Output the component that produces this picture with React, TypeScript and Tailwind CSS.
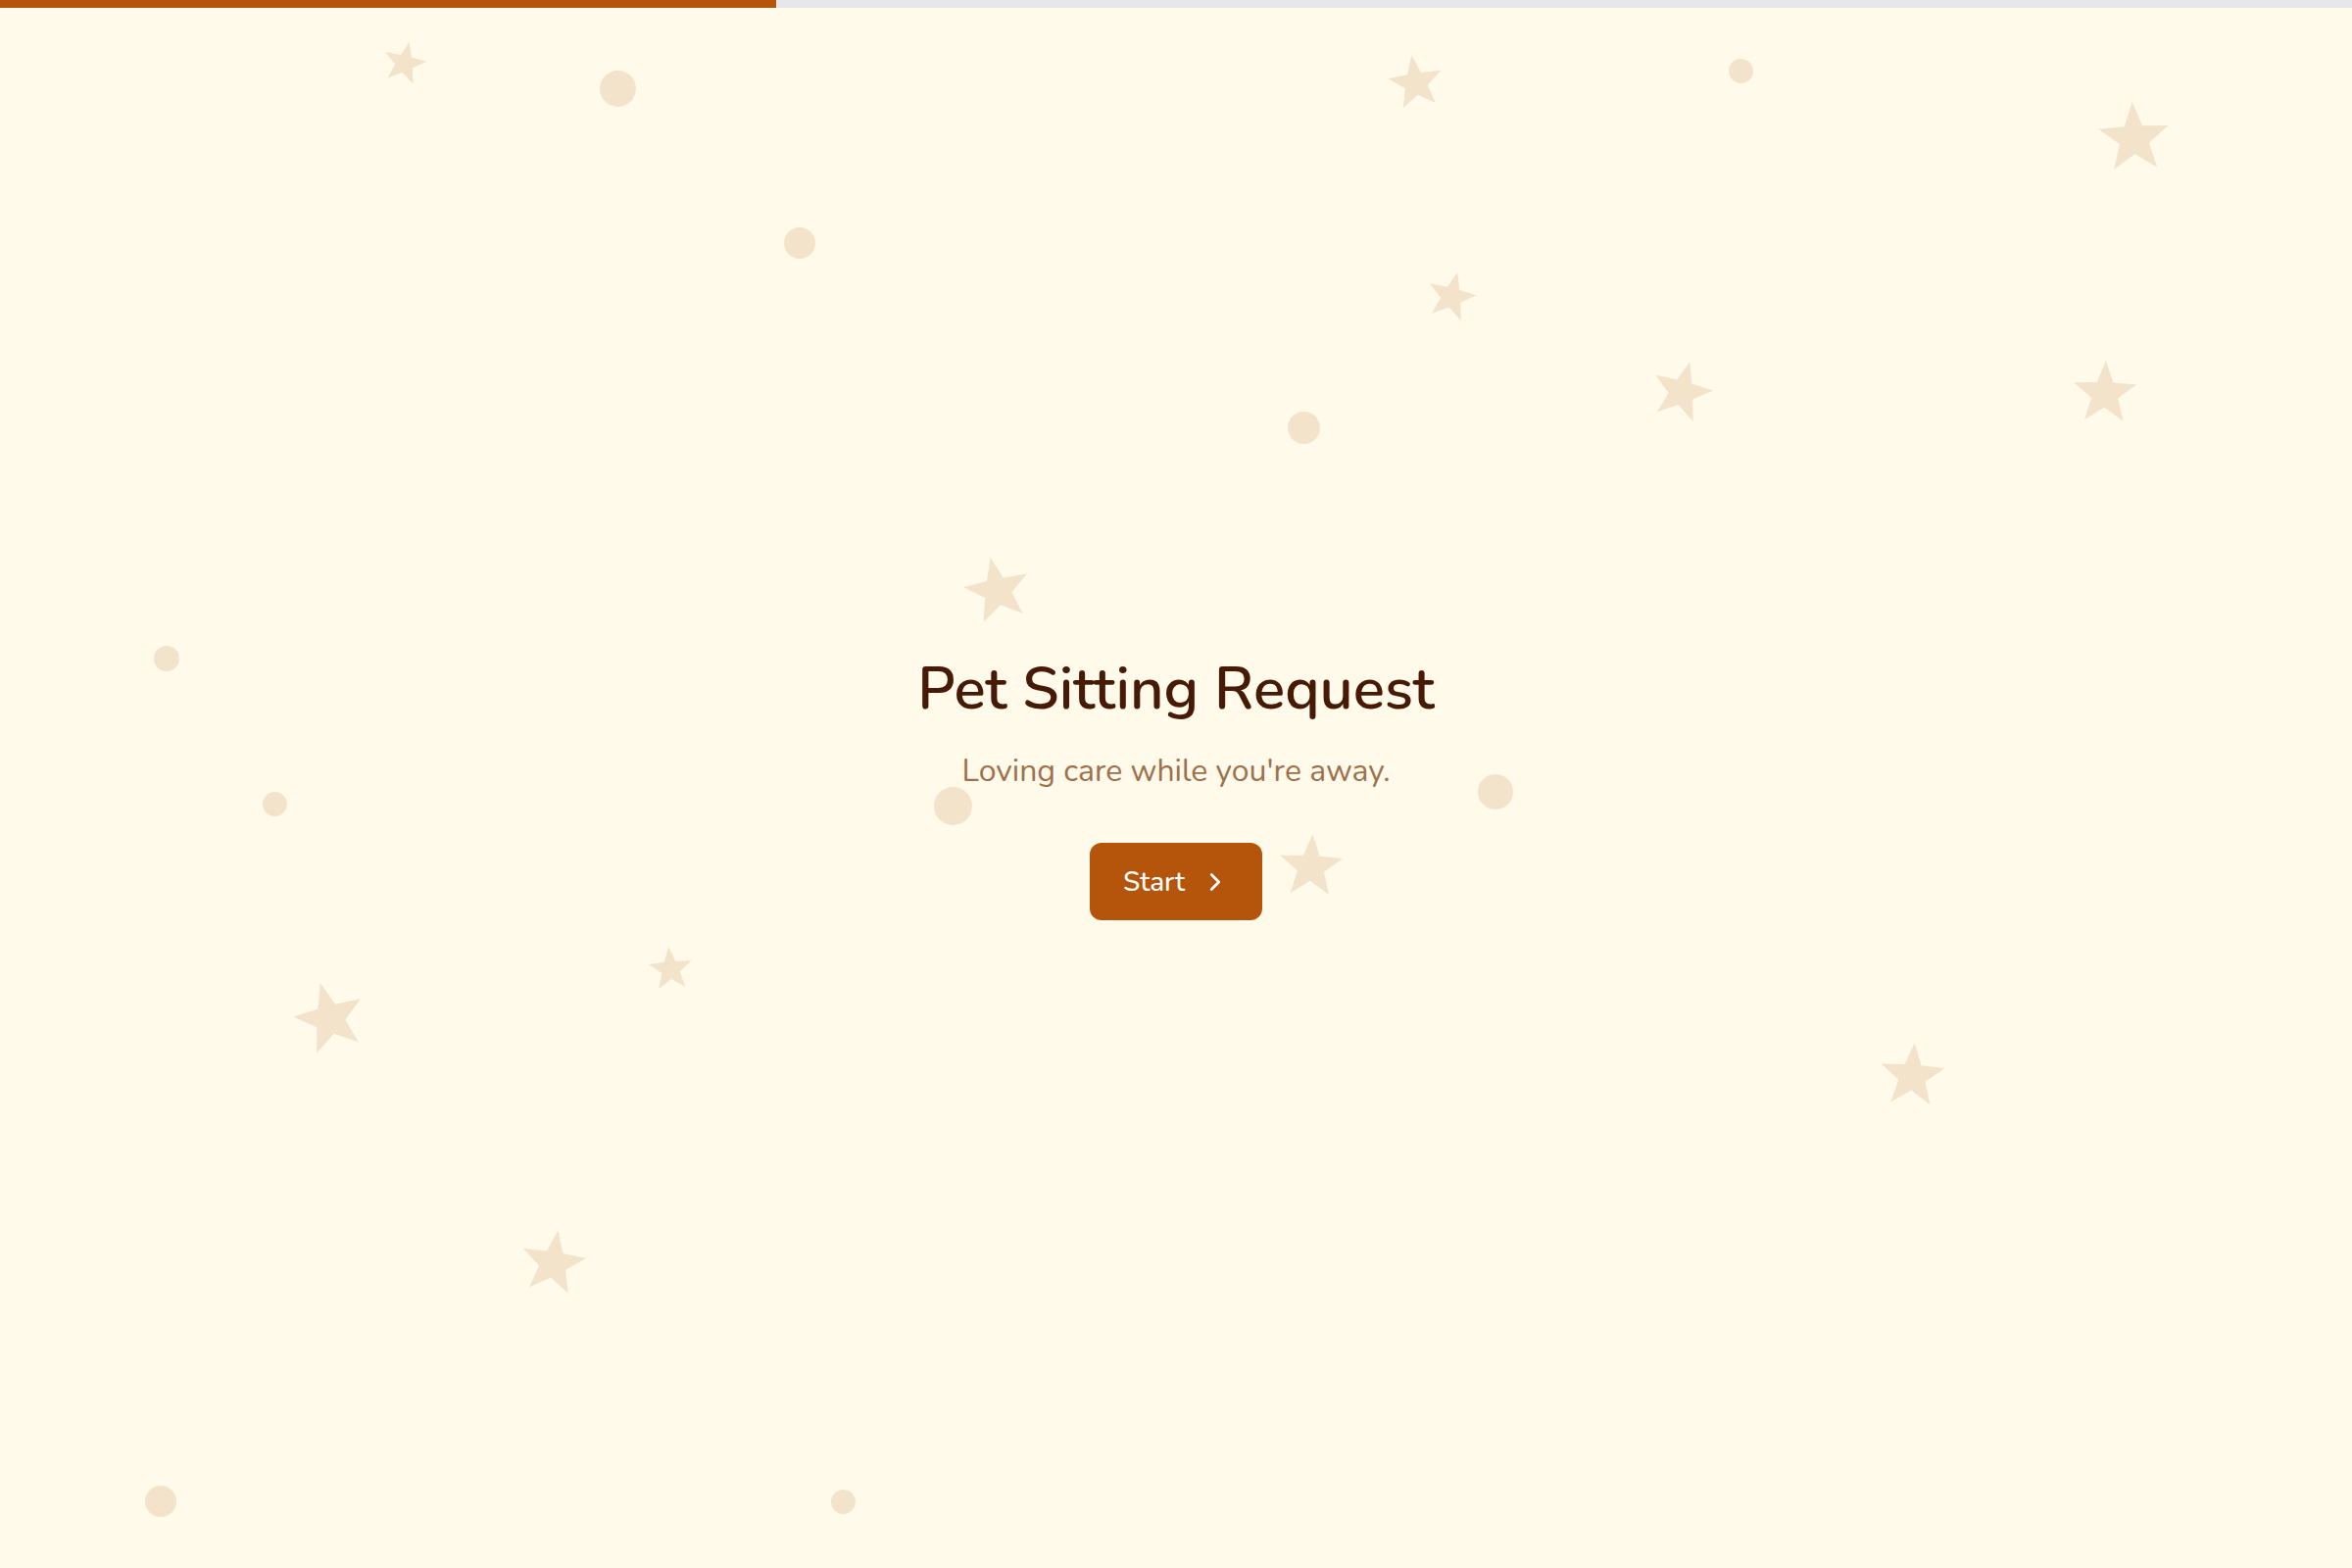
import React from 'react';
import { ChevronRight } from 'lucide-react';

type Deco = { x: number; y: number; h: number; r?: number };

// bounding-box centre, height and tilt of each star (page px)
const STARS: Deco[] = [
  { x: 413, y: 62, h: 41, r: 13 },
  { x: 1445, y: 82, h: 52, r: -9 },
  { x: 2178, y: 138, h: 68, r: -3 },
  { x: 1481, y: 300, h: 47, r: 14 },
  { x: 1716, y: 397, h: 58, r: 15 },
  { x: 2148, y: 398, h: 61, r: 2 },
  { x: 1018, y: 599, h: 63, r: -12 },
  { x: 1338, y: 881, h: 61, r: 3 },
  { x: 684, y: 987, h: 42, r: -5 },
  { x: 337, y: 1036, h: 68, r: -15 },
  { x: 1951, y: 1095, h: 62, r: 4 },
  { x: 564, y: 1286, h: 62, r: 9 },
];

const DOTS: Deco[] = [
  { x: 630, y: 90, h: 37 },
  { x: 1776, y: 72, h: 25 },
  { x: 816, y: 248, h: 32 },
  { x: 1330, y: 436, h: 33 },
  { x: 170, y: 672, h: 26 },
  { x: 280, y: 820, h: 25 },
  { x: 972, y: 822, h: 39 },
  { x: 1526, y: 808, h: 36 },
  { x: 164, y: 1532, h: 32 },
  { x: 860, y: 1532, h: 25 },
];

const starPoints = (() => {
  const pts: string[] = [];
  for (let i = 0; i < 10; i++) {
    const rad = i % 2 === 0 ? 1 : 0.42;
    const a = (Math.PI / 5) * i - Math.PI / 2;
    pts.push(`${(Math.cos(a) * rad).toFixed(3)},${(Math.sin(a) * rad).toFixed(3)}`);
  }
  return pts.join(' ');
})();

const Star: React.FC<Deco> = ({ x, y, h, r = 0 }) => {
  const R = h / 1.809;
  const cy = y + 0.0955 * R;
  return (
    <svg
      className="absolute fill-[#f3e3cb]"
      viewBox="-1 -1 2 2"
      style={{ left: x - R, top: cy - R, width: 2 * R, height: 2 * R, transform: `rotate(${r}deg)` }}
    >
      <polygon points={starPoints} />
    </svg>
  );
};

const Dot: React.FC<Deco> = ({ x, y, h }) => (
  <div
    className="absolute rounded-full bg-[#f3e3cb]"
    style={{ left: x - h / 2, top: y - h / 2, width: h, height: h }}
  />
);

export default function App() {
  const progress = 33;

  return (
    <div className="relative min-h-screen w-full overflow-hidden bg-[#fffaea] font-['Nunito','Lato',sans-serif]">
      <div className="absolute top-0 left-0 right-0 h-2 bg-gray-200">
        <div className="h-full bg-[#b5540b]" style={{ width: `${progress}%` }} />
      </div>

      <div className="pointer-events-none absolute inset-0">
        {STARS.map((s, i) => (
          <Star key={`s${i}`} {...s} />
        ))}
        {DOTS.map((d, i) => (
          <Dot key={`d${i}`} {...d} />
        ))}
      </div>

      <div className="relative flex min-h-screen flex-col items-center justify-center pt-2">
        <h1 className="text-6xl leading-[1.15] font-semibold text-[#461a04]">Pet Sitting Request</h1>
        <p className="mt-7 text-[32px] leading-[1.3] text-[#9e704c]">Loving care while you're away.</p>
        <button className="mt-[53px] flex h-[79px] items-center gap-[16px] rounded-xl bg-[#b5540b] pr-[33px] pl-[34px] text-[28px] font-medium text-white">
          Start
          <ChevronRight className="h-[30px] w-[30px]" strokeWidth={2.2} />
        </button>
      </div>
    </div>
  );
}
